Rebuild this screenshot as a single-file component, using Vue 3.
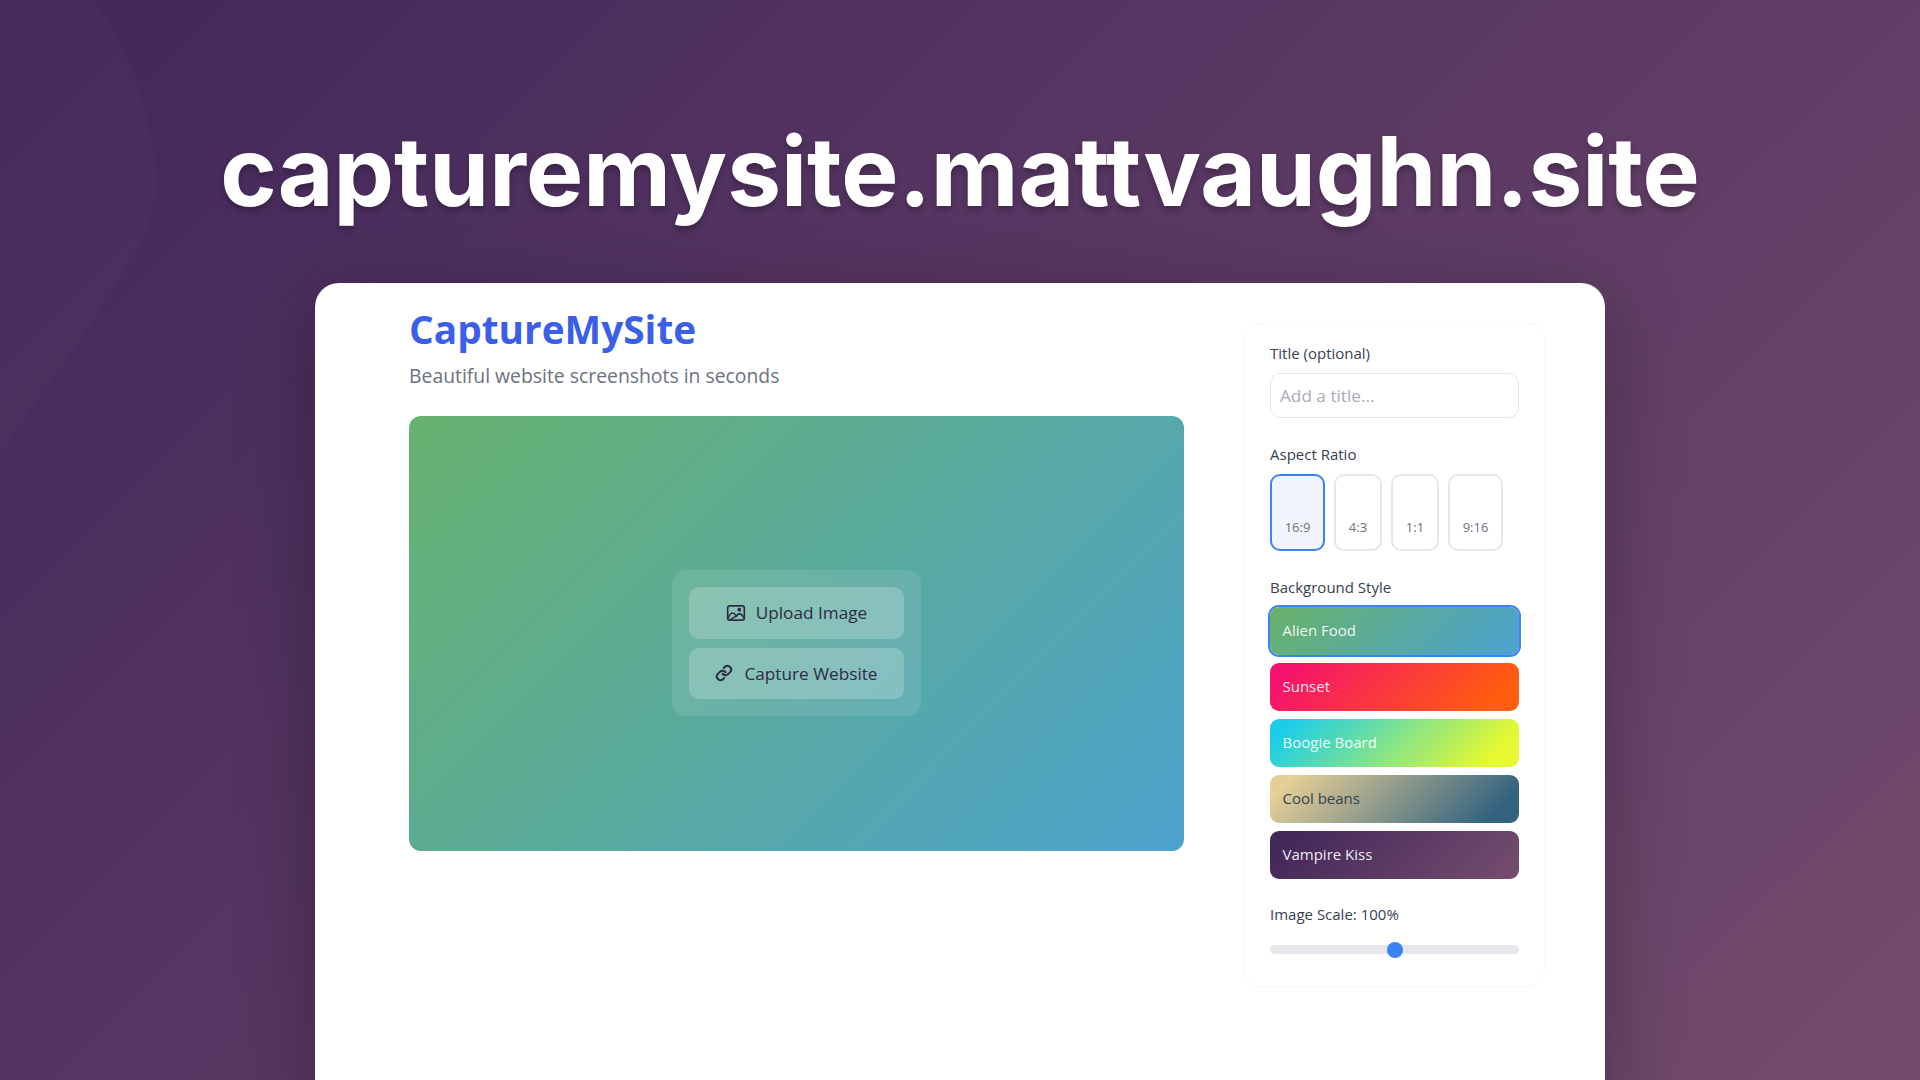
<script setup>
const ratios = [
  { label: '16:9', w: 'r169', active: true },
  { label: '4:3', w: 'r43' },
  { label: '1:1', w: 'r11' },
  { label: '9:16', w: 'r916' },
]
const styles = [
  { name: 'Alien Food', cls: 'alien' },
  { name: 'Sunset', cls: 'sunset' },
  { name: 'Boogie Board', cls: 'boogie' },
  { name: 'Cool beans', cls: 'beans' },
  { name: 'Vampire Kiss', cls: 'vampire' },
]
</script>

<template>
  <div class="page">
    <svg class="blob" viewBox="0 0 160 450" aria-hidden="true">
      <path d="M0 0H90C125 30 150 110 157 175C157 225 130 260 100 310C65 365 30 410 4 448L0 450Z" />
    </svg>
    <h1 class="headline">capturemysite.mattvaughn.site</h1>
    <div class="card">
      <main class="main">
        <h2 class="brand">CaptureMySite</h2>
        <p class="tagline">Beautiful website screenshots in seconds</p>
        <div class="canvas">
          <div class="actions">
            <button class="action">
              <svg class="icon" viewBox="0 0 24 24" fill="none" stroke="currentColor" stroke-width="2" stroke-linecap="round" stroke-linejoin="round">
                <rect x="2" y="3.5" width="20" height="17" rx="2.5" />
                <path d="M2.5 18c1.500-3.500 3.500-6 5.500-6s3 1.500 4.500 3.500c1-1.500 2.200-2.500 3.700-2.500 2 0 4 2 5.300 5" />
                <path d="M5 20.500c2-2.500 5-3.500 7.500-5" />
                <circle cx="16" cy="8" r="1.300" fill="currentColor" />
              </svg>
              Upload Image
            </button>
            <button class="action">
              <svg class="icon link" viewBox="0 0 24 24" fill="none" stroke="currentColor" stroke-width="2.800" stroke-linecap="round" stroke-linejoin="round">
                <path d="M10 13a5 5 0 0 0 7.500.5l3-3a5 5 0 0 0-7-7l-1.700 1.700" />
                <path d="M14 11a5 5 0 0 0-7.500-.5l-3 3a5 5 0 0 0 7 7l1.700-1.700" />
              </svg>
              Capture Website
            </button>
          </div>
        </div>
      </main>
      <aside class="panel">
        <label class="label">Title (optional)</label>
        <input class="title-input" placeholder="Add a title..." />
        <div class="label second">Aspect Ratio</div>
        <div class="ratios">
          <button v-for="r in ratios" :key="r.label" class="ratio" :class="[r.w, { active: r.active }]">{{ r.label }}</button>
        </div>
        <div class="label third">Background Style</div>
        <div class="swatches">
          <button v-for="s in styles" :key="s.name" class="swatch" :class="s.cls">{{ s.name }}</button>
        </div>
        <div class="label fourth">Image Scale: 100%</div>
        <div class="slider"><span class="thumb"></span></div>
      </aside>
    </div>
  </div>
</template>

<style>
html, body { margin: 0; overflow: hidden; }
</style>

<style scoped>
.page {
  position: relative;
  width: 1920px;
  height: 1080px;
  overflow: hidden;
  display: flex;
  flex-direction: column;
  align-items: center;
  background: linear-gradient(135deg, #42275a, #734b6d);
  font-family: "Open Sans", sans-serif;
}
.blob {
  position: absolute;
  left: 0;
  top: 0;
  width: 160px;
  height: 450px;
  fill: rgba(115, 75, 109, 0.09);
}
.headline {
  position: relative;
  flex: none;
  margin: 0;
  height: 283px;
  box-sizing: border-box;
  padding-top: 102px;
  font-family: Inter, sans-serif;
  font-size: 96.15px;
  line-height: 138px;
  font-weight: 700;
  color: #fff;
  text-shadow: 0 4px 6px rgba(0, 0, 0, 0.25);
}
.card {
  position: relative;
  width: 1290px;
  flex: none;
  height: 900px;
  box-sizing: border-box;
  background: #fff;
  border-radius: 24px 24px 0 0;
  box-shadow: 0 20px 80px rgba(0, 0, 0, 0.3);
  display: flex;
  padding-left: 94px;
  padding-top: 18px;
}
.main { width: 775px; flex: none; }
.brand {
  margin: 0;
  font-size: 38.8px;
  line-height: 56px;
  font-weight: 700;
  color: #3b5fe8;
}
.tagline {
  margin: 5px 0 0;
  font-size: 19.36px;
  line-height: 28px;
  color: #6b7280;
}
.canvas {
  margin-top: 26px;
  height: 435px;
  border-radius: 12px;
  background: linear-gradient(135deg, #67b26f, #4ca2cd);
  display: flex;
  justify-content: center;
  align-items: center;
}
.actions {
  margin-top: 19px;
  padding: 17px;
  display: flex;
  flex-direction: column;
  gap: 9px;
  background: rgba(255, 255, 255, 0.1);
  border-radius: 14px;
}
.action {
  width: 215px;
  height: 51.5px;
  border: 0;
  border-radius: 10px;
  background: rgba(255, 255, 255, 0.2);
  color: #2f2b45;
  font: 500 17.2px "Open Sans", sans-serif;
  display: flex;
  justify-content: center;
  align-items: center;
  gap: 10px;
}
.action + .action { gap: 11px; padding-bottom: 1px; }
.icon { width: 20px; height: 20px; flex: none; }
.icon.link { width: 18px; height: 18px; }
.panel {
  width: 302px;
  height: 664px;
  box-sizing: border-box;
  margin-left: 59px;
  margin-top: 22px;
  padding: 19px 25px 0 26px;
  border: 1px solid #f9f9fb;
  border-radius: 16px;
  color: #374151;
}
.label {
  display: block;
  font-size: 15px;
  line-height: 20px;
  font-weight: 500;
  color: #374151;
}
.title-input {
  display: block;
  width: 100%;
  height: 45px;
  box-sizing: border-box;
  margin-top: 10px;
  padding: 0 9px;
  border: 1px solid #e5e7eb;
  border-radius: 10px;
  font: 400 17.2px "Open Sans", sans-serif;
  outline: none;
}
.title-input::placeholder { color: #a9adb6; }
.second { margin-top: 26px; }
.ratios { margin-top: 10px; display: flex; gap: 9px; }
.ratio {
  height: 77px;
  box-sizing: border-box;
  padding: 0 0 13px;
  border: 2px solid #e5e7eb;
  border-radius: 10px;
  background: #fff;
  color: #6b7280;
  font: 400 13px "Open Sans", sans-serif;
  display: flex;
  align-items: flex-end;
  justify-content: center;
}
.ratio.active { border-color: #3b82f6; background: #f1f5fd; }
.r169 { width: 55px; }
.r43 { width: 48px; }
.r11 { width: 48px; }
.r916 { width: 55px; }
.third { margin-top: 26px; }
.swatches { margin-top: 10px; display: flex; flex-direction: column; gap: 8px; }
.swatch {
  height: 48px;
  border: 0;
  border-radius: 9px;
  padding: 0 0 2px 12.5px;
  text-align: left;
  color: rgba(255, 255, 255, 0.92);
  font: 500 15px "Open Sans", sans-serif;
}
.alien { background: linear-gradient(135deg, #67b26f 5%, #4ca2cd 95%); box-shadow: 0 0 0 2px #3b82f6; }
.sunset { background: linear-gradient(135deg, #f5126f 8%, #ff5e0e 88%); }
.boogie { background: linear-gradient(135deg, #1ccde9 8%, #e6f930 88%); }
.beans { background: linear-gradient(135deg, #e6cf96 8%, #34637f 88%); color: #374151; }
.vampire { background: linear-gradient(135deg, #42275a 5%, #734b6d 95%); }
.fourth { margin-top: 25px; }
.slider {
  position: relative;
  margin-top: 21px;
  height: 9px;
  border-radius: 5px;
  background: #e5e7eb;
}
.thumb {
  position: absolute;
  left: 50%;
  top: 50%;
  width: 16px;
  height: 16px;
  margin: -8px 0 0 -8px;
  border-radius: 50%;
  background: #3b82f6;
}
</style>
